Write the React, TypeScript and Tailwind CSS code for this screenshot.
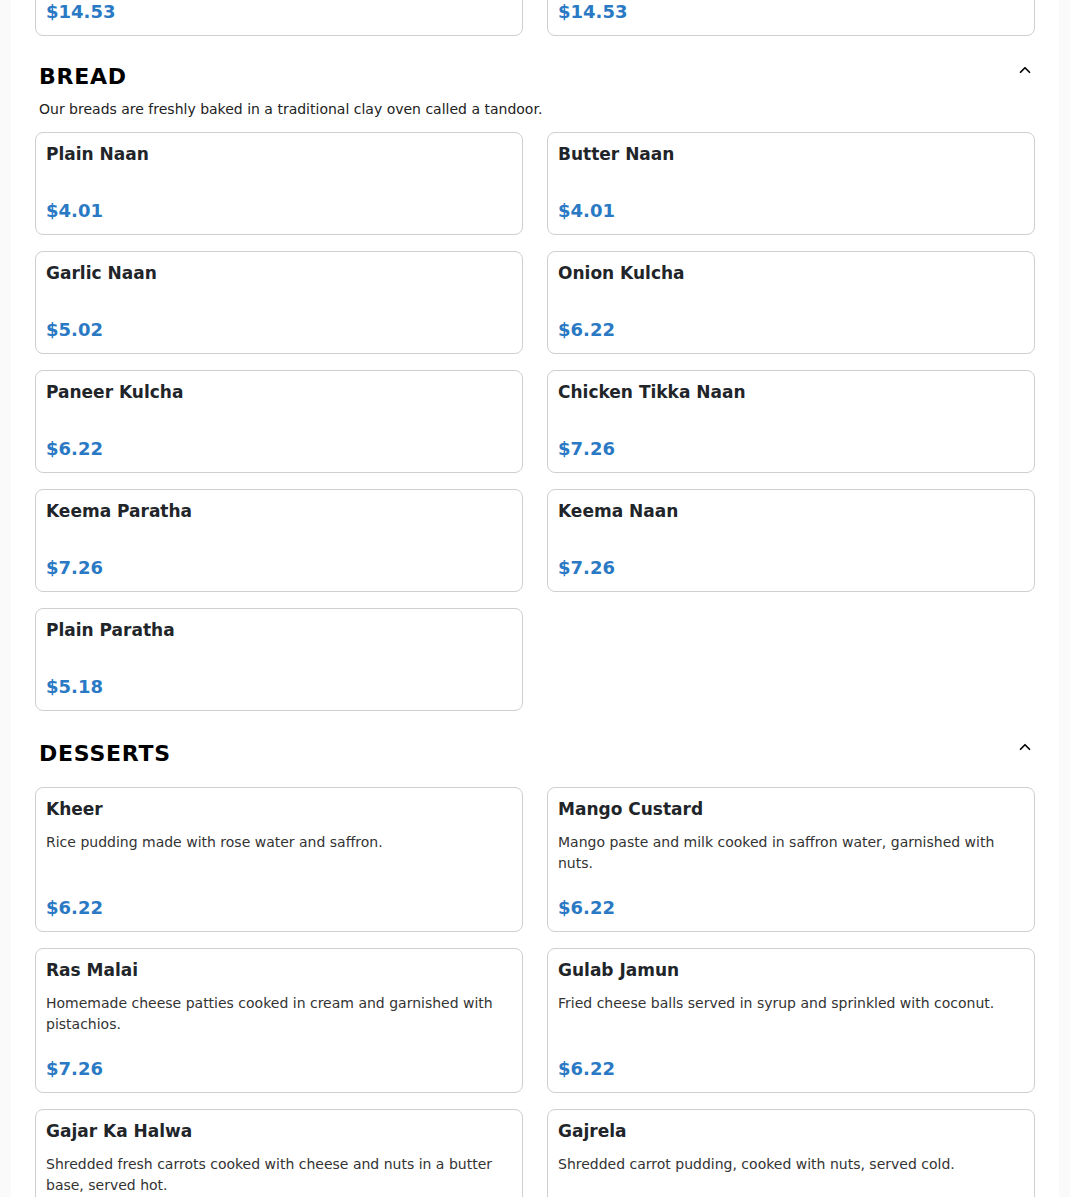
import { ChevronUp } from 'lucide-react'

interface Item {
  name: string
  price: string
  description?: string
}

interface Section {
  title: string
  note?: string
  items: Item[]
}

const previous: Item[] = [
  { name: 'Tandoori Mixed Grill', price: '$14.53' },
  { name: 'Lamb Boti Kebab', price: '$14.53' },
]

const sections: Section[] = [
  {
    title: 'Bread',
    note: 'Our breads are freshly baked in a traditional clay oven called a tandoor.',
    items: [
      { name: 'Plain Naan', price: '$4.01' },
      { name: 'Butter Naan', price: '$4.01' },
      { name: 'Garlic Naan', price: '$5.02' },
      { name: 'Onion Kulcha', price: '$6.22' },
      { name: 'Paneer Kulcha', price: '$6.22' },
      { name: 'Chicken Tikka Naan', price: '$7.26' },
      { name: 'Keema Paratha', price: '$7.26' },
      { name: 'Keema Naan', price: '$7.26' },
      { name: 'Plain Paratha', price: '$5.18' },
    ],
  },
  {
    title: 'Desserts',
    items: [
      { name: 'Kheer', price: '$6.22', description: 'Rice pudding made with rose water and saffron.' },
      { name: 'Mango Custard', price: '$6.22', description: 'Mango paste and milk cooked in saffron water, garnished with nuts.' },
      { name: 'Ras Malai', price: '$7.26', description: 'Homemade cheese patties cooked in cream and garnished with pistachios.' },
      { name: 'Gulab Jamun', price: '$6.22', description: 'Fried cheese balls served in syrup and sprinkled with coconut.' },
      { name: 'Gajar Ka Halwa', price: '$7.26', description: 'Shredded fresh carrots cooked with cheese and nuts in a butter base, served hot.' },
      { name: 'Gajrela', price: '$6.22', description: 'Shredded carrot pudding, cooked with nuts, served cold.' },
    ],
  },
]

function MenuCard({ item }: { item: Item }) {
  return (
    <div className="border border-[#cfcfcf] rounded-lg bg-white px-[10px] pt-[9px] pb-[9px] flex flex-col">
      <h3 className="text-[17px] leading-6 font-bold text-[#212529]">{item.name}</h3>
      {item.description && (
        <p className="mt-[11px] min-h-[42px] text-sm leading-[21px] text-[#333]">{item.description}</p>
      )}
      <p className={`${item.description ? 'mt-5' : 'mt-[31px]'} text-lg leading-7 font-bold text-[#2a79c4]`}>
        {item.price}
      </p>
    </div>
  )
}

export default function App() {
  return (
    <div className="min-h-screen bg-[#fafafa] overflow-hidden" style={{ fontFamily: '"DejaVu Sans", Verdana, sans-serif' }}>
      <div className="mx-auto w-[1048px] bg-white px-6 -mt-[67px] pb-10">
        <div className="grid grid-cols-2 gap-x-6 gap-y-4">
          {previous.map(item => <MenuCard key={item.name} item={item} />)}
        </div>

        {sections.map(section => (
          <section key={section.title} className={section.note ? 'mt-[25px]' : 'mt-[27px]'}>
            <div className="flex items-start justify-between pl-1 pr-[1px]">
              <h2 className="text-[22px] leading-8 font-bold uppercase tracking-[0.75px] text-black">{section.title}</h2>
              <ChevronUp size={18} strokeWidth={2.25} className="mt-0 text-black" />
            </div>
            {section.note && (
              <p className="px-1 mt-[6px] text-sm leading-[21px] text-[#222]">{section.note}</p>
            )}
            <div className={`grid grid-cols-2 gap-x-6 gap-y-4 ${section.note ? 'mt-[12px]' : 'mt-[17px]'}`}>
              {section.items.map(item => <MenuCard key={item.name} item={item} />)}
            </div>
          </section>
        ))}
      </div>
    </div>
  )
}
